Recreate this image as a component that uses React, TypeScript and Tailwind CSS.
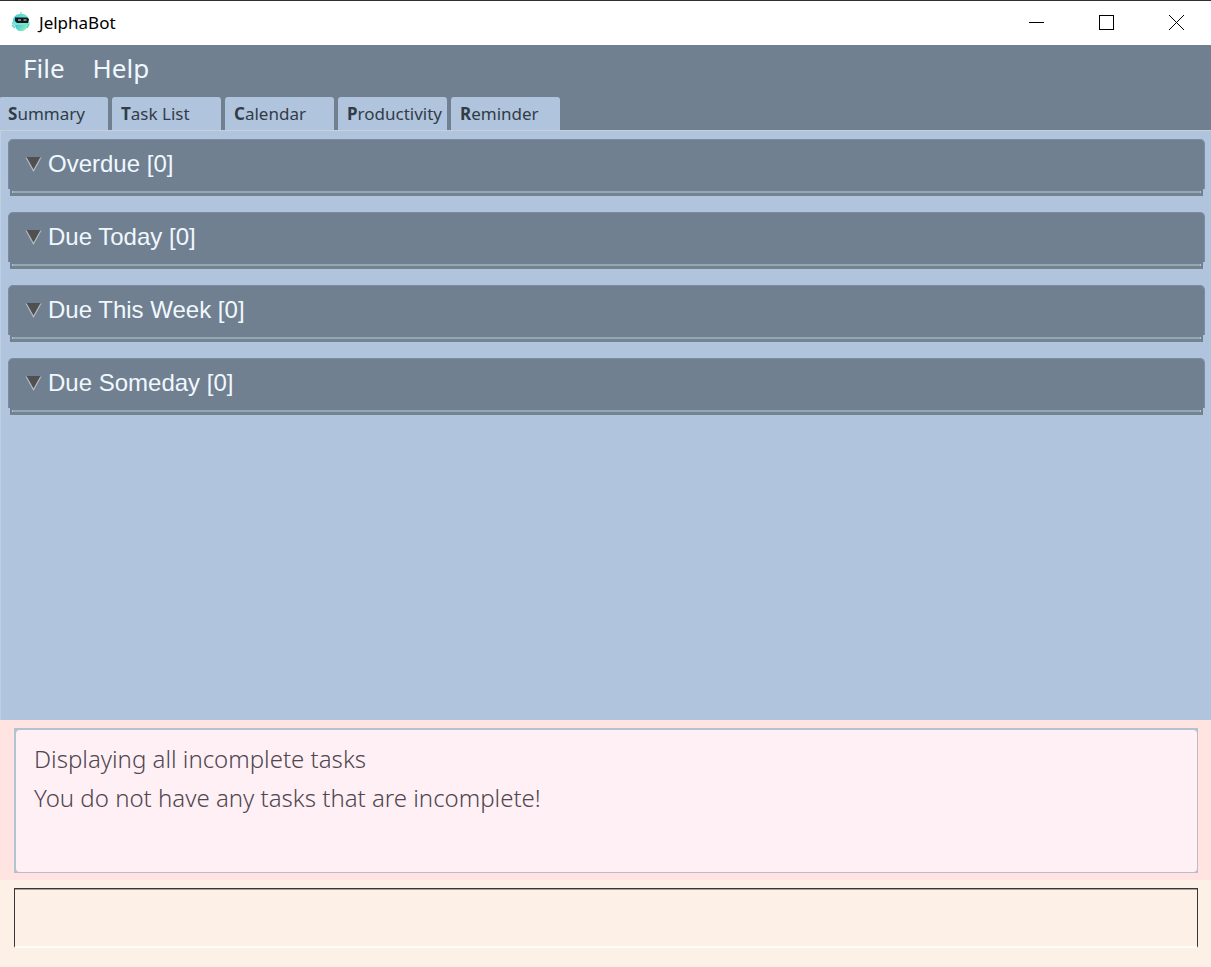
import { useState } from "react";

const TABS = ["Summary", "Task List", "Calendar", "Productivity", "Reminder"];

const SECTIONS = [
  { title: "Overdue", tasks: [] as string[] },
  { title: "Due Today", tasks: [] as string[] },
  { title: "Due This Week", tasks: [] as string[] },
  { title: "Due Someday", tasks: [] as string[] },
];

function RobotLogo() {
  return (
    <svg width="20" height="24" viewBox="0 0 20 24" aria-hidden="true">
      <defs>
        <linearGradient id="robot" x1="0" y1="0" x2="1" y2="0.4">
          <stop offset="0" stopColor="#35c3e8" />
          <stop offset="1" stopColor="#8bedb0" />
        </linearGradient>
      </defs>
      <path d="M10 2v4" stroke="#a9ecc0" strokeWidth="2" />
      <path d="M2 9C4 5 6 4 10 4s7 1 8 6v2H2z" fill="url(#robot)" />
      <path d="M1 12h17l1 1-3 3H4l-3-2z" fill="#7be3c6" />
      <path d="M4 15h12c0 4-2 6-6 6s-5-2-6-6z" fill="url(#robot)" />
      <path d="M1 15l3 3M18 14l-2 4" stroke="#4fcfe0" strokeWidth="1.5" />
      <path d="M4 7.500h12l2 1.500-1 4H6L4 11z" fill="#0c1820" />
      <path d="M7 10h3M12.500 10h3" stroke="#d8f4f8" strokeWidth="1.200" />
    </svg>
  );
}

function TitleBar() {
  return (
    <header className="flex h-[45px] shrink-0 items-center border-t border-[#303030] bg-white pb-0.5 pl-[11px]">
      <RobotLogo />
      <h1 className="ml-2 flex-1 pt-0.5 text-[17px] leading-6 text-black">JelphaBot</h1>
      <button type="button" aria-label="Minimize" className="flex h-full w-[69px] items-center justify-center">
        <svg width="15" height="15" viewBox="0 0 15 15" fill="none" stroke="#000" shapeRendering="crispEdges">
          <path d="M0 7.5h15" />
        </svg>
      </button>
      <button type="button" aria-label="Maximize" className="flex h-full w-[71px] items-center justify-center">
        <svg width="15" height="15" viewBox="0 0 15 15" fill="none" stroke="#000" shapeRendering="crispEdges">
          <rect x="0.5" y="0.5" width="14" height="14" />
        </svg>
      </button>
      <button type="button" aria-label="Close" className="flex h-full w-[69px] items-center justify-center">
        <svg width="15" height="15" viewBox="0 0 15 15" fill="none" stroke="#000">
          <path d="M0 0l15 15M15 0L0 15" />
        </svg>
      </button>
    </header>
  );
}

function Section({ title, tasks }: { title: string; tasks: string[] }) {
  const [open, setOpen] = useState(true);
  return (
    <section>
      <h2>
        <button
          type="button"
          aria-expanded={open}
          onClick={() => setOpen(!open)}
          className="flex h-[50px] w-full items-center gap-1.5 rounded-t-[5px] border border-b-0 border-[#7b8ca0] bg-[#708090] pb-0.5 pl-4 text-left font-['Liberation_Sans',sans-serif] text-[24px] leading-7 text-[#f0f8ff]"
        >
          <svg width="17" height="16" viewBox="0 0 17 16" aria-hidden="true">
            <path d="M0.500 1.500h16L8.500 16z" fill="#b4bcc4" />
            <path d="M1.500 1h14L8.500 13.500z" fill="#505050" />
          </svg>
          {title} [{tasks.length}]
        </button>
      </h2>
      {open && (
        <div className="mx-0.5 border-x-2 border-b-[3px] border-t-2 border-[#708090] border-b-[#74848f]">
          <ul className="mx-px border-t-2 border-[#94a7b9]">
            {tasks.map((task) => (
              <li key={task}>{task}</li>
            ))}
          </ul>
        </div>
      )}
    </section>
  );
}

export default function App() {
  const [active, setActive] = useState(0);
  return (
    <div className="flex min-h-screen flex-col bg-[#b0c4de] font-['Noto_Sans','Open_Sans',sans-serif]">
      <TitleBar />
      <nav className="flex h-[52px] shrink-0 items-start gap-7 bg-[#708090] pl-[23px] pt-[3px] text-[26px] leading-10 text-[#f0f8ff]">
        <button type="button">File</button>
        <button type="button">Help</button>
      </nav>
      <div role="tablist" className="-ml-px flex h-[34px] shrink-0 gap-1 border-b border-[#c8cfd8] bg-[#708090]">
        {TABS.map((tab, i) => (
          <button
            key={tab}
            type="button"
            role="tab"
            aria-selected={i === active}
            onClick={() => setActive(i)}
            className="w-[109px] whitespace-nowrap rounded-t-[3px] bg-[#b0c4de] pl-[9px] text-left text-[17px] leading-6 text-[#323c46]"
          >
            <span className="font-bold">{tab[0]}</span>
            {tab.slice(1)}
          </button>
        ))}
      </div>
      <main className="flex flex-1 flex-col gap-4 border-l border-[#c0cfe2] pb-4 pl-[7px] pr-1.5 pt-2">
        {SECTIONS.map((section) => (
          <Section key={section.title} title={section.title} tasks={section.tasks} />
        ))}
      </main>
      <div className="flex h-40 shrink-0 bg-[#ffe4e1] pb-[7px] pl-3.5 pr-[13px] pt-2">
        <div className="flex flex-1 border border-l-2 border-t-2 border-[#c0bac8] border-l-[#b2c3d2] border-t-[#b2c3d2] bg-[#b8c4d4]">
          <textarea
            readOnly
            aria-label="Result"
            className="flex-1 resize-none rounded-[4px] bg-[#fff0f5] px-[18px] py-[9px] text-[24px] font-light leading-[39px] text-[#504650] outline-none"
            value={"Displaying all incomplete tasks\nYou do not have any tasks that are incomplete!"}
          />
        </div>
      </div>
      <div className="flex h-[87px] shrink-0 bg-[#fdf0e6] pb-[19px] pl-3.5 pr-[13px] pt-2">
        <input
          type="text"
          aria-label="Command"
          className="w-full border border-b-2 border-[#383838] border-b-[#fffdf8] bg-transparent px-4 text-[24px] font-light text-[#383838] shadow-[inset_0_1px_0_#a8a09a] outline-none"
        />
      </div>
    </div>
  );
}
